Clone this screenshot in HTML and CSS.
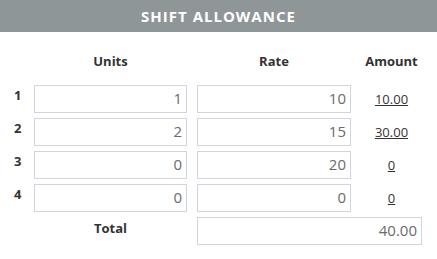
FILE: index.html
```html
<!DOCTYPE html>
<html lang="en">
<head>
  <meta charset="UTF-8">
  <title>Shift Allowance</title>
  <link rel="stylesheet" href="styles.css">
</head>
<body>

  <div class="painel">
    <h2 class="titulo">Shift Allowance</h2>

    <div class="grade">
      <div></div>
      <div class="cab">Units</div>
      <div class="cab">Rate</div>
      <div class="cab">Amount</div>

      <div class="num">1</div>
      <input type="text" value="1">
      <input type="text" value="10">
      <a class="valor" href="#">10.00</a>

      <div class="num">2</div>
      <input type="text" value="2">
      <input type="text" value="15">
      <a class="valor" href="#">30.00</a>

      <div class="num">3</div>
      <input type="text" value="0">
      <input type="text" value="20">
      <a class="valor" href="#">0</a>

      <div class="num">4</div>
      <input type="text" value="0">
      <input type="text" value="0">
      <a class="valor" href="#">0</a>

      <div></div>
      <div class="cab total">Total</div>
      <input type="text" class="soma" value="40.00">
    </div>
  </div>

</body>
</html>
```

FILE: styles.css
```css
body {
  margin: 0;
  padding: 0;
  font-family: "Open Sans", Arial, sans-serif;
  background: white;
}

.titulo {
  margin: 0;
  height: 32px;
  line-height: 32px;
  background: #8e9698;
  color: white;
  text-align: center;
  text-transform: uppercase;
  font-size: 15px;
  font-weight: bold;
  letter-spacing: 1px;
}

.grade {
  display: grid;
  grid-template-columns: 24px 153px 154px 61px;
  column-gap: 10px;
  row-gap: 5px;
  align-items: center;
  padding-top: 18px;
}

.cab {
  font-size: 13px;
  font-weight: bold;
  color: #333;
  text-align: center;
  height: 30px;
  line-height: 22px;
}

.cab.total {
  height: auto;
  line-height: 20px;
  align-self: start;
  padding-top: 1px;
}

.num {
  font-size: 13px;
  font-weight: bold;
  color: #333;
  padding-left: 14px;
  align-self: start;
  line-height: 20px;
}

input {
  box-sizing: border-box;
  height: 28px;
  width: 100%;
  margin: 0;
  border: 1px solid #d2d5de;
  padding: 0 4px 2px 4px;
  font-family: "Open Sans", Arial, sans-serif;
  font-size: 15px;
  color: #6b6b6b;
  text-align: right;
  background: white;
}

.soma {
  grid-column: 3 / span 2;
}

.valor {
  font-size: 13px;
  color: #333;
  text-align: center;
  text-decoration: underline;
}
```
